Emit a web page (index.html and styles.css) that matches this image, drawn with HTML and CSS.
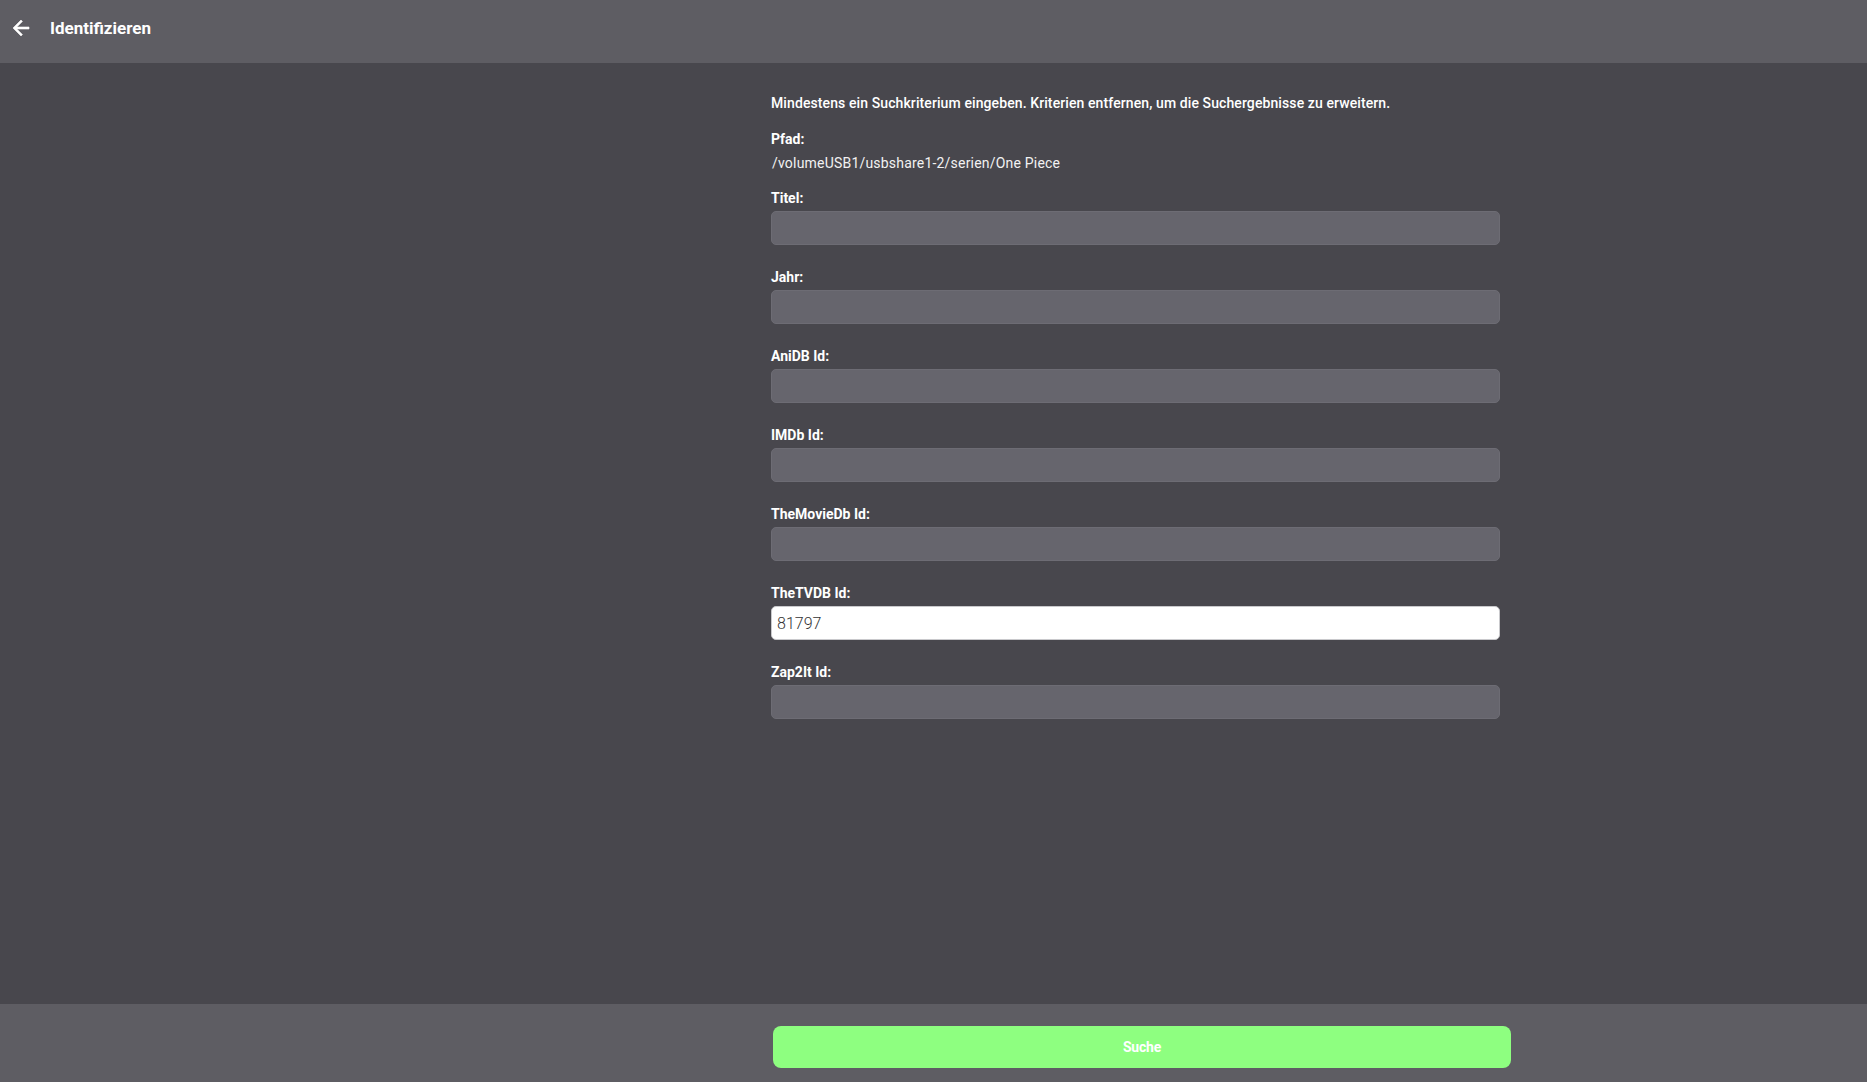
FILE: index.html
```html
<!DOCTYPE html>
<html lang="de">
<head>
<meta charset="utf-8">
<title>Identifizieren</title>
<link rel="stylesheet" href="styles.css">
</head>
<body>
<div class="page">
  <header class="topbar">
    <button class="back" type="button" aria-label="Zurück">
      <svg width="24" height="24" viewBox="0 0 24 24"><path d="M20 11H7.83l5.59-5.59L12 4l-8 8 8 8 1.41-1.41L7.83 13H20v-2z" fill="#ffffff" stroke="#ffffff" stroke-width="0.6"/></svg>
    </button>
    <h1 class="title">Identifizieren</h1>
  </header>
  <main class="main">
    <form class="form">
      <p class="hint">Mindestens ein Suchkriterium eingeben. Kriterien entfernen, um die Suchergebnisse zu erweitern.</p>
      <div class="label">Pfad:</div>
      <div class="path">/volumeUSB1/usbshare1-2/serien/One Piece</div>
      <div class="fields">
        <label class="field"><span class="label">Titel:</span><input class="input" type="text"></label>
        <label class="field"><span class="label">Jahr:</span><input class="input" type="text"></label>
        <label class="field"><span class="label">AniDB Id:</span><input class="input" type="text"></label>
        <label class="field"><span class="label">IMDb Id:</span><input class="input" type="text"></label>
        <label class="field"><span class="label">TheMovieDb Id:</span><input class="input" type="text"></label>
        <label class="field"><span class="label">TheTVDB Id:</span><input class="input input-active" type="text" value="81797"></label>
        <label class="field"><span class="label">Zap2It Id:</span><input class="input" type="text"></label>
      </div>
    </form>
  </main>
  <footer class="footer">
    <button class="search" type="button">Suche</button>
  </footer>
</div>
</body>
</html>
```

FILE: styles.css
```css
* { box-sizing: border-box; }
html, body { margin: 0; padding: 0; height: 100%; }
body {
  font-family: Roboto, "Noto Sans", "Liberation Sans", sans-serif;
  background: #48474d;
  color: #ffffff;
}
.page {
  display: flex;
  flex-direction: column;
  height: 100vh;
}
.topbar {
  height: 63px;
  flex: 0 0 63px;
  background: #5e5d63;
  display: flex;
  align-items: center;
  padding: 0 0 7px 9px;
}
.back {
  background: none;
  border: 0;
  padding: 0;
  width: 24px;
  height: 24px;
  display: flex;
  cursor: pointer;
}
.title {
  margin: 0 0 0 17px;
  font-size: 17px;
  font-weight: 700;
  letter-spacing: 0;
  color: #ffffff;
}
.main {
  flex: 1 1 auto;
  display: flex;
  padding: 30px 0 0 771px;
}
.form {
  width: 729px;
  display: flex;
  flex-direction: column;
}
.hint {
  margin: 0;
  font-size: 14px;
  line-height: 20px;
  font-weight: 500;
  letter-spacing: 0.1px;
}
.label {
  display: block;
  font-size: 14px;
  line-height: 20px;
  font-weight: 700;
  color: #ffffff;
}
.form > .label { margin-top: 16px; }
.path {
  margin-top: 4px;
  padding-left: 1px;
  font-size: 14px;
  line-height: 20px;
  letter-spacing: 0.2px;
  color: #f2f2f2;
}
.fields {
  margin-top: 15px;
  display: flex;
  flex-direction: column;
  gap: 22px;
}
.field {
  display: flex;
  flex-direction: column;
  gap: 3px;
}
.input {
  height: 34px;
  width: 100%;
  border: 1px solid #6d6c74;
  border-radius: 5px;
  background: #66656d;
  padding: 0 5px;
  font-family: Roboto, "Noto Sans", "Liberation Sans", sans-serif;
  font-size: 16px;
  color: #333333;
  outline: none;
}
.input-active {
  background: #ffffff;
  border-color: #c9c9cc;
  color: #333333;
  font-weight: 300;
}
.footer {
  height: 78px;
  flex: 0 0 78px;
  background: #5e5d63;
  display: flex;
  align-items: flex-start;
  padding: 22px 0 0 773px;
}
.search {
  width: 738px;
  height: 42px;
  border: 0;
  border-radius: 8px;
  background: #8eff80;
  color: #ffffff;
  font-family: Roboto, "Noto Sans", "Liberation Sans", sans-serif;
  font-size: 14px;
  font-weight: 700;
  letter-spacing: -0.2px;
  cursor: pointer;
}
```
